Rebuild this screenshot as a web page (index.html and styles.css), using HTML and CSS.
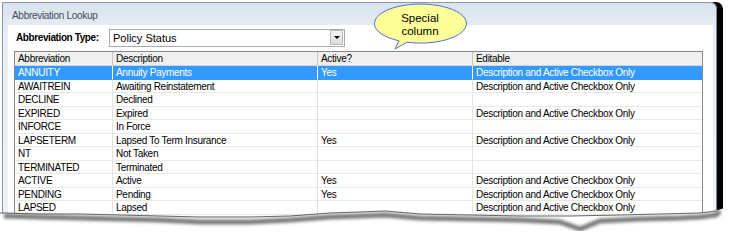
FILE: index.html
```html
<!DOCTYPE html>
<html lang="en">
<head>
    <meta charset="UTF-8">
    <title>Abbreviation Lookup</title>
    <link rel="stylesheet" href="styles.css">
</head>
<body>
    <div id="window">
        <div class="title">Abbreviation Lookup</div>
        <div class="panel">
            <div class="type-row">
                <label>Abbreviation Type:</label>
                <div class="combo">
                    <span>Policy Status</span>
                    <div class="drop"><i></i></div>
                </div>
            </div>
            <div class="grid">
                <div class="row head">
                    <div>Abbreviation</div><div>Description</div><div>Active?</div><div>Editable</div>
                </div>
                <div class="row sel">
                    <div>ANNUITY</div><div>Annuity Payments</div><div>Yes</div><div>Description and Active Checkbox Only</div>
                </div>
                <div class="row">
                    <div>AWAITREIN</div><div>Awaiting Reinstatement</div><div></div><div>Description and Active Checkbox Only</div>
                </div>
                <div class="row">
                    <div>DECLINE</div><div>Declined</div><div></div><div></div>
                </div>
                <div class="row">
                    <div>EXPIRED</div><div>Expired</div><div></div><div>Description and Active Checkbox Only</div>
                </div>
                <div class="row">
                    <div>INFORCE</div><div>In Force</div><div></div><div></div>
                </div>
                <div class="row">
                    <div>LAPSETERM</div><div>Lapsed To Term Insurance</div><div>Yes</div><div>Description and Active Checkbox Only</div>
                </div>
                <div class="row">
                    <div>NT</div><div>Not Taken</div><div></div><div></div>
                </div>
                <div class="row">
                    <div>TERMINATED</div><div>Terminated</div><div></div><div></div>
                </div>
                <div class="row">
                    <div>ACTIVE</div><div>Active</div><div>Yes</div><div>Description and Active Checkbox Only</div>
                </div>
                <div class="row">
                    <div>PENDING</div><div>Pending</div><div>Yes</div><div>Description and Active Checkbox Only</div>
                </div>
                <div class="row">
                    <div>LAPSED</div><div>Lapsed</div><div></div><div>Description and Active Checkbox Only</div>
                </div>
                <div class="row">
                    <div></div><div></div><div></div><div></div>
                </div>
            </div>
        </div>
        <div class="callout">
            <svg width="104" height="52" viewBox="0 0 104 52">
                <path d="M38 41.2 A46 19.5 0 1 0 30 39.8 L26 48 Z" fill="#ffff99" stroke="#4f6fe0" stroke-width="1"/>
            </svg>
            <span>Special<br>column</span>
        </div>
    </div>
    <svg id="tear" width="731" height="40" viewBox="0 0 731 40">
        <defs>
            <filter id="blur"><feGaussianBlur stdDeviation="1.8"/></filter>
        </defs>
        <path d="M0 0 L0 11 L40 12 L80 12 L120 13 L160 14 L200 15 L250 15 L290 14 L330 11 L360 10 L385 9 L420 12 L470 13 L520 14 L570 14 L620 13 L660 12 L700 11 L716 9 L724 6 L731 6 L731 40 L0 40 Z" fill="#fff"/>
        <path d="M4 14 L40 15 L80 16 L120 17 L160 18 L200 20 L250 20 L290 18 L330 15 L360 14 L385 13 L420 16 L470 17 L520 18 L560 20 L580 27 L600 19 L640 17 L680 16 L700 15 L716 13 L720 9" fill="none" stroke="#7a7a7a" stroke-width="5" filter="url(#blur)"/>
        <path d="M0 11 L40 12 L80 12 L120 13 L160 14 L200 15 L250 15 L290 14 L330 11 L360 10 L385 9 L420 12 L470 13 L520 14 L570 14 L620 13 L660 12 L700 11 L716 9" fill="none" stroke="#666" stroke-width="1"/>
    </svg>
</body>
</html>
```

FILE: styles.css
```css
body{
    margin: 0;
    width: 731px;
    height: 240px;
    background-color: #fff;
    font-family: "Liberation Sans", Arial, sans-serif;
    font-size: 10px;
    letter-spacing: -0.3px;
    color: #000;
    position: relative;
    overflow: hidden;
}
#window{
    position: relative;
    margin: 2px 0 0 2px;
    width: 713px;
    height: 230px;
    border: 1px solid #8c98a6;
    border-right-color: #7c8896;
    border-radius: 0 7px 0 0;
    background: linear-gradient(#d9e3ee, #e8eef5 30px, #eef2f6);
    box-shadow: 6px 0 0 #000;
}
.title{
    height: 22px;
    line-height: 26px;
    padding-left: 9px;
    color: #3e4a58;
}
.panel{
    margin: 0 3px 0 5px;
    height: 205px;
    background-color: #fff;
    padding: 4px 0 0 6px;
}
.type-row{
    display: flex;
    align-items: center;
    height: 17px;
    margin-bottom: 5px;
}
.type-row label{
    font-weight: bold;
    letter-spacing: -0.4px;
    white-space: nowrap;
    width: 93px;
    padding-left: 2px;
}
.combo{
    width: 234px;
    height: 16px;
    border: 1px solid #a5acb5;
    display: flex;
    align-items: center;
    justify-content: space-between;
    font-size: 11px;
    letter-spacing: 0;
}
.combo span{
    padding-left: 3px;
}
.drop{
    width: 11px;
    height: 13px;
    margin-right: 1px;
    border: 1px solid #b8bcc2;
    background: linear-gradient(#f6f6f6, #dcdcdc);
    display: flex;
    align-items: center;
    justify-content: center;
}
.drop i{
    border-left: 3px solid transparent;
    border-right: 3px solid transparent;
    border-top: 3px solid #000;
}
.grid{
    width: 687px;
    height: 200px;
    border: 1px solid #828790;
    border-bottom: none;
}
.row{
    display: grid;
    grid-template-columns: 97px 205px 155px 230px;
    height: 13.5px;
    line-height: 13px;
}
.row > div{
    padding-left: 3px;
    border-left: 1px solid #e3e3e3;
    border-bottom: 1px solid #e8e8e8;
    white-space: nowrap;
    overflow: hidden;
}
.row > div:first-child{
    border-left: none;
}
.row.head{
    height: 14px;
    background-color: #f0f0f0;
}
.row.head > div{
    border-left-color: #c8c8c8;
    border-bottom: 1px solid #d5d5d5;
}
.row.sel{
    background-color: #3399ff;
    color: #fff;
}
.row.sel > div{
    border-left-color: #fff;
    border-bottom-color: #3399ff;
}
.callout{
    position: absolute;
    left: 366px;
    top: -2px;
    width: 104px;
    height: 52px;
}
.callout svg{
    display: block;
}
.callout span{
    position: absolute;
    left: 5px;
    top: 11px;
    width: 92px;
    text-align: center;
    font-size: 11.5px;
    letter-spacing: 0;
    line-height: 13px;
    color: #000;
}
#tear{
    position: absolute;
    left: 0;
    top: 202px;
}
```
